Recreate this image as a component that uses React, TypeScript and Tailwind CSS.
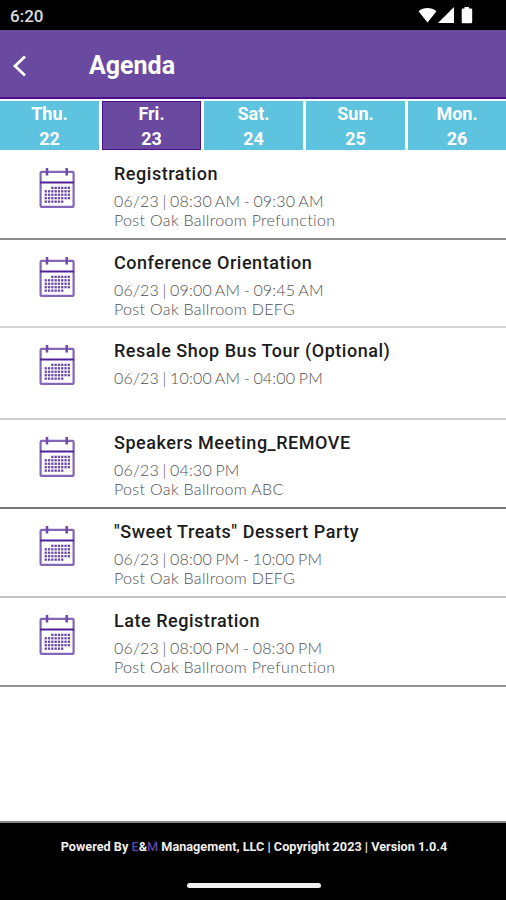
import React from "react";

const days = [
  { name: "Thu.", date: "22", width: "w-[99px]" },
  { name: "Fri.", date: "23", width: "w-[99px]", active: true },
  { name: "Sat.", date: "24", width: "w-[99px]" },
  { name: "Sun.", date: "25", width: "w-[99px]" },
  { name: "Mon.", date: "26", width: "w-[98px]" },
];

const events = [
  { title: "Registration", time: "06/23 | 08:30 AM - 09:30 AM", place: "Post Oak Ballroom Prefunction", row: "h-[89px] border-b-[#8b8b8b]" },
  { title: "Conference Orientation", time: "06/23 | 09:00 AM - 09:45 AM", place: "Post Oak Ballroom DEFG", row: "h-[88px] border-b-[#d4d4d4]" },
  { title: "Resale Shop Bus Tour (Optional)", time: "06/23 | 10:00 AM - 04:00 PM", place: "", row: "h-[92px] border-b-[#cccccc]" },
  { title: "Speakers Meeting_REMOVE", time: "06/23 | 04:30 PM", place: "Post Oak Ballroom ABC", row: "h-[89px] border-b-[#777777]" },
  { title: "\"Sweet Treats\" Dessert Party", time: "06/23 | 08:00 PM - 10:00 PM", place: "Post Oak Ballroom DEFG", row: "h-[89px] border-b-[#c3c3c3]" },
  { title: "Late Registration", time: "06/23 | 08:00 PM - 08:30 PM", place: "Post Oak Ballroom Prefunction", row: "h-[89px] border-b-[#909090]" },
];

// First and last dot column of each line in the calendar grid
const dotLines = [
  [2, 7],
  [0, 7],
  [0, 7],
  [0, 7],
  [0, 5],
];

function CalendarIcon() {
  return (
    <svg width="36" height="42" viewBox="0 0 36 42" fill="none" className="block shrink-0">
      <rect x="1.6" y="4.9" width="33" height="35" rx="1" stroke="#8466b6" strokeWidth="2.2" />
      <path d="M1 15.4H35" stroke="#4f2196" strokeWidth="2" />
      <path d="M8 1V8.500M27.7 1V8.500" stroke="#6f49a8" strokeWidth="2.5" />
      {dotLines.map(([from, to], line) =>
        Array.from({ length: to - from + 1 }, (_, i) => (
          <rect key={`${line}-${i}`} x={5.6 + (from + i) * 3.3} y={19.7 + line * 3.45} width="2.3" height="2.3" fill="#6a46a6" />
        ))
      )}
    </svg>
  );
}

export default function App() {
  return (
    <div className="flex h-[900px] w-[506px] flex-col overflow-hidden bg-white font-['Roboto',sans-serif]">
      <div className="flex h-[30px] shrink-0 items-center justify-between bg-black pl-[10px] pr-[32px] pt-[2px]">
        <span className="text-[17px] font-medium leading-5 text-[#dcdcdc]">6:20</span>
        <svg width="56" height="18" viewBox="0 0 56 18" fill="#fff" className="block">
          <path d="M0.5 4.2C5.8-.2 13.2-.2 18.5 4.2L9.5 15.5Z" />
          <path d="M36 0V16H20Z" />
          <path d="M46.500 0h4.500v1.500h2q1.200 0 1.200 1.200v12.300q0 1.200-1.200 1.200h-8.100q-1.200 0-1.200-1.200V2.700q0-1.200 1.200-1.200h1.600z" />
        </svg>
      </div>

      <header className="flex h-[69px] shrink-0 items-center border-b-2 border-[#4a0f8e] bg-[#6a4aa1] pl-[12px]">
        <svg width="16" height="22" viewBox="0 0 16 22" fill="none" className="mt-[4px] block">
          <path d="M13 1.500L3 11L13 20.500" stroke="#fff" strokeWidth="2.800" />
        </svg>
        <h1 className="ml-[61px] mt-[5px] text-[25px] font-bold leading-8 text-white">Agenda</h1>
      </header>

      <nav className="flex shrink-0 gap-[3px] pt-[2px]">
        {days.map((d) => (
          <div
            key={d.date}
            className={`${d.width} h-[49px] text-center text-[18px] font-bold leading-[25px] text-white ${
              d.active ? "border border-[#4a0f8e] bg-[#6a4aa1]" : "bg-[#5dc3df] pt-[1px]"
            }`}
          >
            <div className="-mt-[1px]">{d.name}</div>
            <div>{d.date}</div>
          </div>
        ))}
      </nav>

      <main className="flex-1 pt-[1px]">
        {events.map((e) => (
          <div key={e.title} className={`${e.row} flex border-b-2 pl-[39px] pt-[12px]`}>
            <div className="mt-[4px]">
              <CalendarIcon />
            </div>
            <div className="ml-[39px] whitespace-nowrap">
              <h2 className="text-[18px] font-medium leading-[22px] tracking-[0.53px] text-[#1c1c1c]">{e.title}</h2>
              <div className="mt-[6px] font-['Lato',sans-serif] text-[16px] font-light leading-[19px] text-[#505050]">
                <p className="tracking-[0.18px] [word-spacing:-1px]">{e.time}</p>
                <p className="tracking-[0.34px]">{e.place}</p>
              </div>
            </div>
          </div>
        ))}
      </main>

      <footer className="flex h-[79px] shrink-0 flex-col items-center border-t-2 border-[#858585] bg-black pl-[2px]">
        <p className="mt-[15px] whitespace-nowrap text-[12.7px] font-bold leading-[18px] text-[#eeeeee]">
          Powered By <span className="font-medium text-[#5848a8]">E</span>&amp;<span className="font-medium text-[#5848a8]">M</span> Management, LLC | Copyright 2023 | Version 1.0.4
        </p>
        <div className="mt-[27px] h-[5px] w-[134px] rounded-full bg-[#f0f0f0]" />
      </footer>
    </div>
  );
}
